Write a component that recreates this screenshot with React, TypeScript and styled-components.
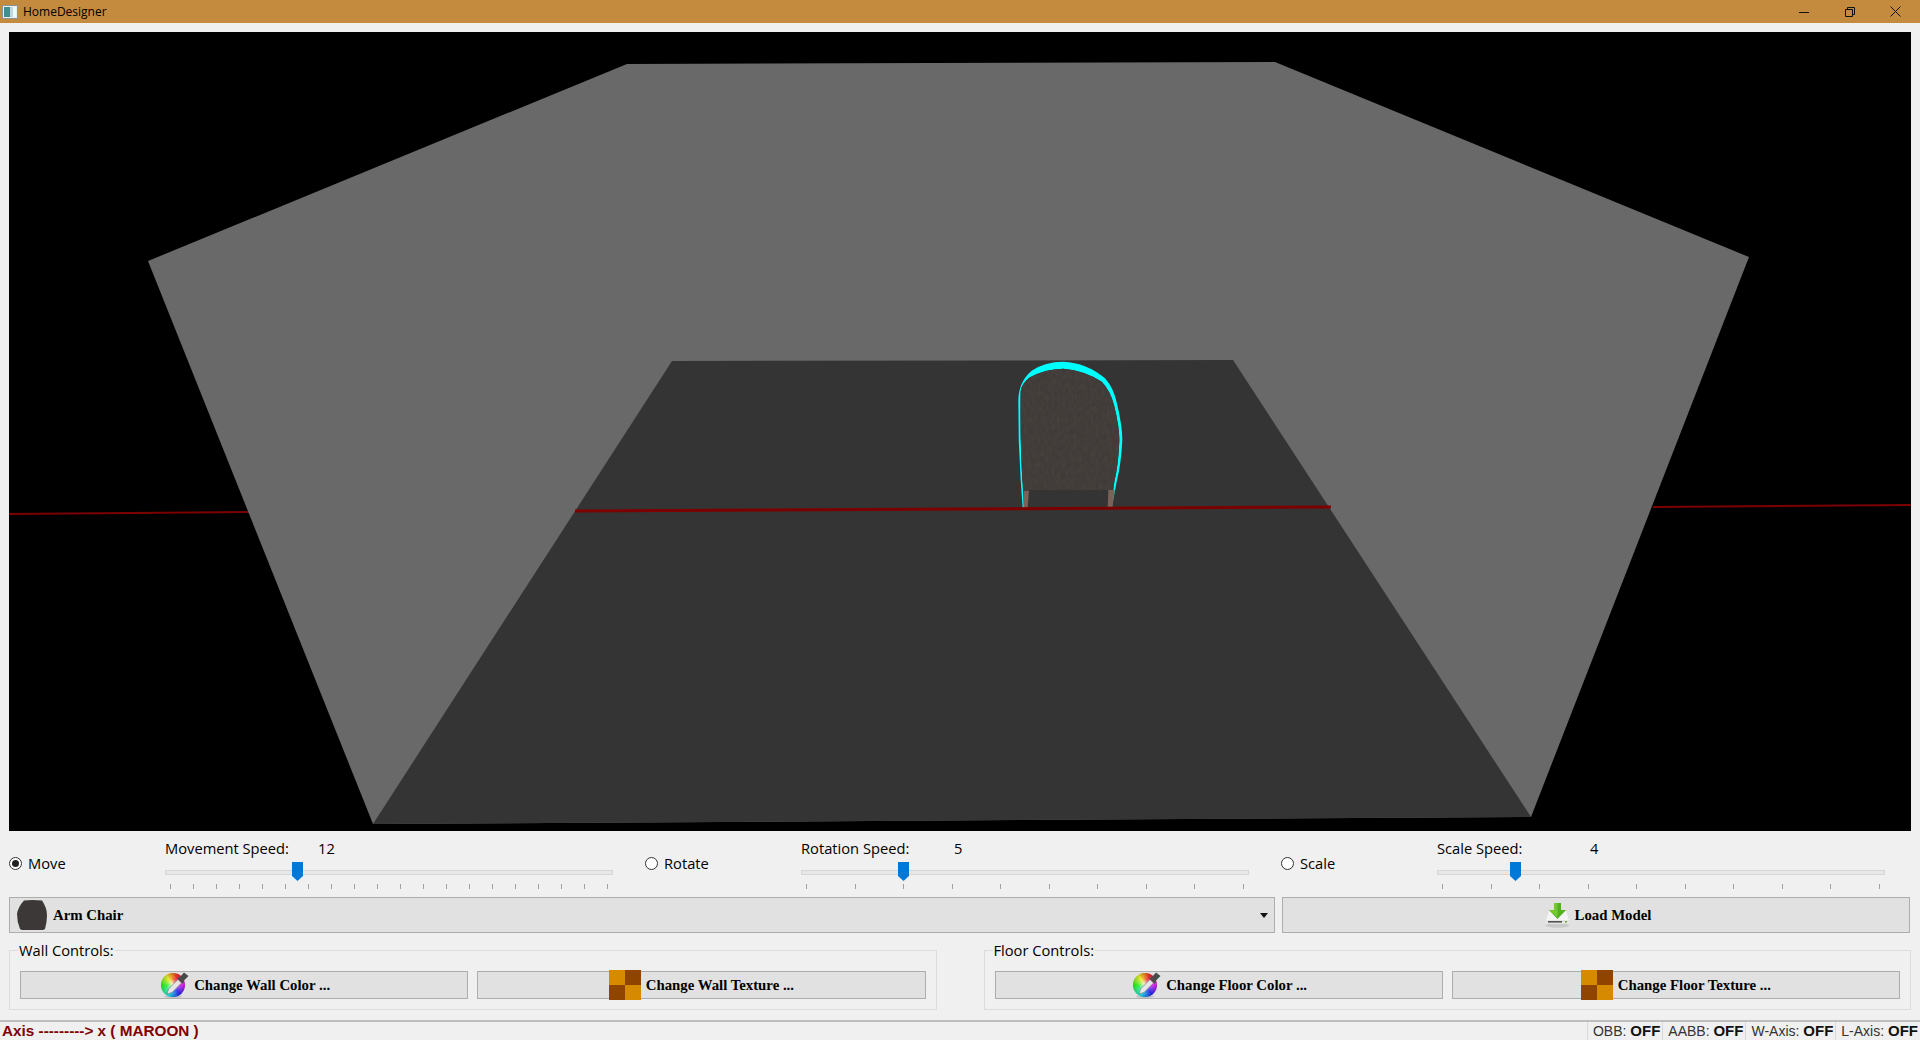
import React from 'react';
import styled, { createGlobalStyle } from 'styled-components';

const GlobalStyle = createGlobalStyle`
  html, body {
    margin: 0;
    padding: 0;
    background: #f0f0f0;
  }
  * {
    box-sizing: border-box;
  }
`;

const Window = styled.div`
  width: 1920px;
  height: 1040px;
  display: flex;
  flex-direction: column;
  overflow: hidden;
  background: #f0f0f0;
  color: #000;
  font-family: 'Open Sans', 'Noto Sans', sans-serif;
`;

const TitleBar = styled.div`
  height: 23px;
  flex: none;
  display: flex;
  align-items: center;
  padding: 0 2px;
  background: #c48b3f;
  font-size: 12px;
`;

const TitleText = styled.span`
  margin-left: 5px;
  flex: 1;
`;

const WindowButton = styled.div`
  width: 45.5px;
  height: 23px;
  display: flex;
  align-items: center;
  justify-content: center;
`;

const Body = styled.div`
  flex: 1;
  display: flex;
  flex-direction: column;
  padding: 9px 9px 0;
`;

const Viewport = styled.svg`
  display: block;
  flex: none;
  width: 1902px;
  height: 799px;
  background: #000;
`;

const SpeedRow = styled.div`
  height: 66px;
  flex: none;
  display: grid;
  grid-template-columns: repeat(3, 630px);
  column-gap: 6px;
`;

const SpeedGroup = styled.div`
  display: grid;
  grid-template-columns: 156px 448px;
`;

const RadioLabel = styled.label`
  display: flex;
  align-items: center;
  gap: 6px;
  height: 64px;
  font-size: 14.7px;
`;

const RadioDot = styled.span<{ $checked?: boolean }>`
  width: 13px;
  height: 13px;
  flex: none;
  display: flex;
  align-items: center;
  justify-content: center;
  border: 1px solid #333;
  border-radius: 50%;
  background: #fff;

  &::after {
    content: '';
    width: 7px;
    height: 7px;
    border-radius: 50%;
    background: ${(p) => (p.$checked ? '#222' : 'transparent')};
  }
`;

const SliderColumn = styled.div`
  display: flex;
  flex-direction: column;
`;

const SliderHead = styled.div`
  height: 34px;
  padding-bottom: 1px;
  display: flex;
  align-items: center;
  font-size: 14.7px;
  line-height: 20px;
`;

const SliderName = styled.span`
  width: 153px;
`;

const Track = styled.div`
  position: relative;
  height: 5px;
  margin-top: 5px;
  background: #e7e7e7;
  border: 1px solid #d6d6d6;
`;

const Handle = styled.svg<{ $left: number }>`
  position: absolute;
  left: ${(p) => p.$left}px;
  top: -9px;
`;

const Ticks = styled.div`
  display: flex;
  justify-content: space-between;
  padding: 0 5px;
  margin-top: 9px;
`;

const Tick = styled.i`
  display: block;
  width: 1px;
  height: 5px;
  background: #a0a0a0;
`;

const ActionRow = styled.div`
  flex: none;
  height: 36px;
  display: grid;
  grid-template-columns: 1266px 628px;
  column-gap: 7px;
`;

const ActionButton = styled.div<{ $height?: number; $nudge?: number }>`
  height: ${(p) => p.$height ?? 36}px;
  padding-left: ${(p) => p.$nudge ?? 0}px;
  display: flex;
  align-items: center;
  justify-content: center;
  gap: 5px;
  background: #e1e1e1;
  border: 1px solid #adadad;
  font-family: 'Liberation Serif', serif;
  font-weight: 700;
  font-size: 14.8px;
  white-space: nowrap;
`;

const Combo = styled(ActionButton)`
  justify-content: flex-start;
  padding: 0 6px 0 7px;
  gap: 6px;
`;

const ComboText = styled.span`
  flex: 1;
`;

const GroupRow = styled.div`
  flex: none;
  margin-top: 7px;
  display: grid;
  grid-template-columns: 1fr 1fr;
  column-gap: 47px;
`;

const Group = styled.fieldset`
  margin: 0;
  height: 70px;
  padding: 11px 10px 0;
  display: grid;
  grid-template-columns: 1fr 1fr;
  column-gap: 9px;
  border: 1px solid #dcdcdc;
  min-width: 0;
`;

const GroupTitle = styled.legend`
  padding: 0 1px;
  margin-left: -2px;
  font-size: 14.7px;
  line-height: 20px;
`;

const StatusBar = styled.div`
  margin-top: 10px;
  flex: 1;
  display: flex;
  justify-content: space-between;
  align-items: stretch;
  border-top: 2px solid #bdbdbd;
  font-family: 'Liberation Sans', sans-serif;
  font-size: 14px;
`;

const AxisNote = styled.div`
  padding-left: 2px;
  color: #800000;
  font-weight: 700;
  font-size: 15.3px;
  line-height: 17px;
`;

const StatusCells = styled.div`
  display: flex;
`;

const StatusCell = styled.div`
  padding: 0 2px 0 5px;
  border-left: 1px solid #d8d8d8;
  color: #333;
  line-height: 17px;
  white-space: nowrap;

  b {
    color: #111;
    font-size: 15px;
  }
`;

const Minimize = () => (
  <svg width="10" height="10" viewBox="0 0 10 10">
    <path d="M0 5.5h10" stroke="#111" />
  </svg>
);

const Restore = () => (
  <svg width="10" height="10" viewBox="0 0 10 10" fill="none" stroke="#111">
    <path d="M.5 2.5h7v7h-7zM2.5 2.5v-2h7v7h-2" />
  </svg>
);

const Close = () => (
  <svg width="11" height="11" viewBox="0 0 11 11" fill="none" stroke="#111">
    <path d="M.5.5l10 10M10.5.5l-10 10" />
  </svg>
);

const AppIcon = () => (
  <svg width="16" height="14" viewBox="0 0 16 14">
    <rect x=".5" y=".5" width="15" height="13" fill="#e9eef0" stroke="#8c9498" />
    <rect x="2" y="2" width="6" height="10" fill="#3f8f8f" />
    <rect x="8" y="2" width="3" height="10" fill="#c3d7dd" />
    <rect x="11" y="2" width="3" height="10" fill="#f4f7f8" />
  </svg>
);

// hue runs counter-clockwise from red at the top
const sector = (i: number) => {
  const a = (i / 36) * Math.PI * 2 - Math.PI / 2;
  const b = ((i + 1.2) / 36) * Math.PI * 2 - Math.PI / 2;
  return `M12 13L${12 + 12 * Math.cos(a)} ${13 + 12 * Math.sin(a)}A12 12 0 0 1 ${12 + 12 * Math.cos(b)} ${13 + 12 * Math.sin(b)}Z`;
};

const ColorIcon = ({ id }: { id: string }) => (
  <svg width="28" height="26" viewBox="0 0 28 26">
    <defs>
      <radialGradient id={id}>
        <stop offset="0" stopColor="#fff" stopOpacity=".75" />
        <stop offset=".55" stopColor="#fff" stopOpacity=".1" />
        <stop offset="1" stopColor="#000" stopOpacity=".15" />
      </radialGradient>
    </defs>
    <ellipse cx="12" cy="24.5" rx="9" ry="1.5" fill="#bdbdbd" />
    {Array.from({ length: 36 }, (_, i) => (
      <path key={i} d={sector(i)} fill={`hsl(${(360 - i * 10 + 20) % 360} 85% 52%)`} />
    ))}
    <circle cx="12" cy="13" r="12" fill={`url(#${id})`} />
    <path d="M6 22L7.5 17L17 7.5L20.5 11L11 20.5Z" fill="#e6e6e6" stroke="#6f6f6f" strokeWidth=".6" />
    <path d="M16 6L19 5L23 .5L27.5 4L23 8.5L22 12Z" fill="#4a4a4a" />
  </svg>
);

const CheckerIcon = () => (
  <svg width="32" height="30" viewBox="0 0 32 30" shapeRendering="crispEdges">
    <rect width="16" height="15" fill="#d68a00" />
    <rect x="16" width="16" height="15" fill="#8f4500" />
    <rect y="15" width="16" height="15" fill="#8f4500" />
    <rect x="16" y="15" width="16" height="15" fill="#d68a00" />
  </svg>
);

const LoadIcon = () => (
  <svg width="25" height="25" viewBox="0 0 25 25">
    <ellipse cx="12.5" cy="22.5" rx="12" ry="2.2" fill="#c9c9c9" />
    <path d="M4 8H21L24 17V21H1V17Z" fill="#f4f4f4" />
    <rect x="1" y="17" width="23" height="4" fill="#e4e4e4" />
    <rect x="3" y="18" width="14" height="1.6" fill="#555" />
    <rect x="20" y="18" width="2" height="1.6" fill="#5db32a" />
    <path d="M9 0H16V7H21L12.5 16L4 7H9Z" fill="#55b01e" />
    <path d="M9 0H12.5V14L4 7H9Z" fill="#73c92f" />
  </svg>
);

const ChairIcon = () => (
  <svg width="30" height="30" viewBox="0 0 30 30">
    <path
      d="M7 0.5Q15 -0.5 25 0.5Q30 8 30 15Q30 22 28 29L26 30H5L3 29Q0 22 0 14Q1 7 7 0.5Z"
      fill="#3c3837"
    />
  </svg>
);

const ComboArrow = () => (
  <svg width="8" height="5" viewBox="0 0 8 5">
    <path d="M0 0H8L4 5Z" fill="#111" />
  </svg>
);

const bodyOutline =
  'L187 420Q180 300 182 155Q185 130 210 112Q255 87 310 86Q375 92 425 125Q450 150 462 195Q478 260 478 300Q476 370 463 425';

const Scene = () => (
  <Viewport viewBox="9 32 1902 799">
    <defs>
      <filter id="leather" x="0" y="0" width="100%" height="100%" colorInterpolationFilters="sRGB">
        <feTurbulence type="fractalNoise" baseFrequency="0.12 0.06" numOctaves="3" seed="4" />
        <feColorMatrix values="0 0 0 0 0.31  0 0 0 0 0.28  0 0 0 0 0.26  0.9 0 0 0 -0.2" />
        <feComposite in2="SourceGraphic" operator="in" />
        <feMerge>
          <feMergeNode in="SourceGraphic" />
          <feMergeNode />
        </feMerge>
      </filter>
    </defs>
    <path d="M9 514L250 512M1653 507L1911 505" stroke="#7d0000" strokeWidth="2" />
    <polygon points="148,261 627,64 1275,62 1749,257 1531,817 373,824" fill="#696969" />
    <polygon points="672,361 1233,360 1531,817 373,824" fill="#343434" />
    <g transform="translate(960 340) scale(0.33333)">
      <path
        d="M188 505L182 420Q174 300 175 180Q176 125 215 92Q255 65 310 65Q380 68 435 115Q462 145 472 195Q487 260 487 300Q484 370 470 425L455 505Z"
        fill="#00ffff"
      />
      <path d={`M192 505${bodyOutline}L450 505Z`} fill="#343434" />
      <path d={`M192 450${bodyOutline}L460 450Z`} fill="#3f3a38" filter="url(#leather)" />
      <path d="M192 452H207L203 505H191Z" fill="#7a6258" />
      <path d="M445 450H464L457 505H443Z" fill="#7a6258" />
    </g>
    <path d="M575 511L1331 507" stroke="#7d0000" strokeWidth="3" />
  </Viewport>
);

const Slider = ({ name, value, ticks, left }: { name: string; value: string; ticks: number; left: number }) => (
  <SliderColumn>
    <SliderHead>
      <SliderName>{name}</SliderName>
      <span>{value}</span>
    </SliderHead>
    <Track>
      <Handle $left={left} width="11" height="19" viewBox="0 0 11 19">
        <path d="M0 0H11V14L5.5 19L0 14Z" fill="#0078d7" />
      </Handle>
    </Track>
    <Ticks>
      {Array.from({ length: ticks }, (_, i) => (
        <Tick key={i} />
      ))}
    </Ticks>
  </SliderColumn>
);

const speeds = [
  { mode: 'Move', checked: true, name: 'Movement Speed:', value: '12', ticks: 20, left: 126 },
  { mode: 'Rotate', checked: false, name: 'Rotation Speed:', value: '5', ticks: 10, left: 96 },
  { mode: 'Scale', checked: false, name: 'Scale Speed:', value: '4', ticks: 10, left: 72 },
];

const App = () => (
  <Window>
    <GlobalStyle />
    <TitleBar>
      <AppIcon />
      <TitleText>HomeDesigner</TitleText>
      <WindowButton>
        <Minimize />
      </WindowButton>
      <WindowButton>
        <Restore />
      </WindowButton>
      <WindowButton>
        <Close />
      </WindowButton>
    </TitleBar>
    <Body>
      <Scene />
      <SpeedRow>
        {speeds.map((s) => (
          <SpeedGroup key={s.mode}>
            <RadioLabel>
              <RadioDot $checked={s.checked} />
              {s.mode}
            </RadioLabel>
            <Slider name={s.name} value={s.value} ticks={s.ticks} left={s.left} />
          </SpeedGroup>
        ))}
      </SpeedRow>
      <ActionRow>
        <Combo>
          <ChairIcon />
          <ComboText>Arm Chair</ComboText>
          <ComboArrow />
        </Combo>
        <ActionButton $nudge={4}>
          <LoadIcon />
          Load Model
        </ActionButton>
      </ActionRow>
      <GroupRow>
        <Group>
          <GroupTitle>Wall Controls:</GroupTitle>
          <ActionButton $height={28} $nudge={3}>
            <ColorIcon id="wheel-wall" />
            Change Wall Color ...
          </ActionButton>
          <ActionButton $height={28}>
            <CheckerIcon />
            Change Wall Texture ...
          </ActionButton>
        </Group>
        <Group>
          <GroupTitle>Floor Controls:</GroupTitle>
          <ActionButton $height={28} $nudge={3}>
            <ColorIcon id="wheel-floor" />
            Change Floor Color ...
          </ActionButton>
          <ActionButton $height={28}>
            <CheckerIcon />
            Change Floor Texture ...
          </ActionButton>
        </Group>
      </GroupRow>
    </Body>
    <StatusBar>
      <AxisNote>Axis ---------&gt; x ( MAROON )</AxisNote>
      <StatusCells>
        <StatusCell>
          OBB: <b>OFF</b>
        </StatusCell>
        <StatusCell>
          AABB: <b>OFF</b>
        </StatusCell>
        <StatusCell>
          W-Axis: <b>OFF</b>
        </StatusCell>
        <StatusCell>
          L-Axis: <b>OFF</b>
        </StatusCell>
      </StatusCells>
    </StatusBar>
  </Window>
);

export default App;
